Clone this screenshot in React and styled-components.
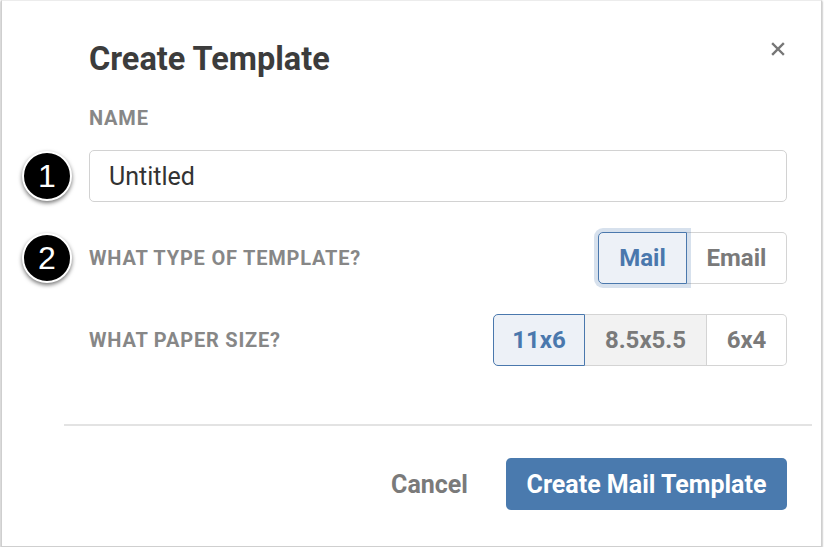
import React from 'react';
import styled, { createGlobalStyle } from 'styled-components';

const GlobalStyle = createGlobalStyle`
  html, body {
    margin: 0;
    background: #ffffff;
  }
  body {
    font-family: Roboto, "Liberation Sans", sans-serif;
  }
`;

const Frame = styled.div`
  position: relative;
  box-sizing: border-box;
  width: 821px;
  height: 547px;
  margin-left: 1px;
  background: #fff;
  border: 1px solid #cfcfcf;
  border-top-color: #ececec;
  box-shadow: 0 1px 2px rgba(0, 0, 0, 0.45);
  display: flex;
  flex-direction: column;
`;

const Body = styled.div`
  padding: 38px 34px 0 87px;
  display: flex;
  flex-direction: column;
`;

const Header = styled.div`
  display: flex;
  align-items: flex-start;
  justify-content: space-between;
`;

const Title = styled.h1`
  margin: 0;
  font-size: 32.5px;
  line-height: 40px;
  font-weight: 700;
  color: #3c3c3c;
`;

const Close = styled.button`
  border: 0;
  background: none;
  padding: 0;
  margin: 3px 2px 0 0;
  width: 14px;
  height: 14px;
  cursor: pointer;
  display: flex;
`;

const Label = styled.div`
  font-size: 20px;
  line-height: 22px;
  font-weight: 700;
  color: #878787;
  letter-spacing: 0.8px;
`;

const NameLabel = styled(Label)`
  margin-top: 28px;
`;

const Row = styled.div`
  position: relative;
  margin-top: ${p => p.$gap}px;
  display: flex;
  align-items: center;
  justify-content: space-between;
`;

const Input = styled.input`
  box-sizing: border-box;
  width: 100%;
  height: 52px;
  border: 1px solid #d2d2d2;
  border-radius: 5px;
  padding: 0 19px;
  font-family: inherit;
  font-size: 25px;
  color: #333;
  outline: none;
`;

const Badge = styled.div`
  position: absolute;
  left: -67px;
  top: 50%;
  transform: translateY(-50%);
  box-sizing: border-box;
  width: 50px;
  height: 50px;
  border-radius: 50%;
  background: #000;
  border: 2px solid #fff;
  box-shadow: 0 2px 4px rgba(0, 0, 0, 0.55);
  color: #fff;
  font-family: "Liberation Sans", Arial, sans-serif;
  font-size: 32px;
  display: flex;
  align-items: center;
  justify-content: center;
`;

const Segmented = styled.div`
  display: flex;
  height: 52px;
`;

const Segment = styled.button`
  box-sizing: border-box;
  height: 52px;
  width: ${p => p.$w}px;
  padding: 0;
  font-family: inherit;
  font-size: 24px;
  font-weight: 700;
  border: ${p => (p.$active ? 1.5 : 1)}px solid ${p => (p.$active ? '#4a78ad' : '#d4d4d4')};
  border-left-width: ${p => (p.$first || p.$active ? 1.5 : 0)}px;
  background: ${p => (p.$active ? '#edf1f7' : p.$muted ? '#f2f2f2' : '#fff')};
  color: ${p => (p.$active ? '#4a78ad' : '#7a7a7a')};
  box-shadow: ${p => (p.$glow ? '0 0 0 4px rgba(74, 120, 173, 0.22)' : 'none')};
  position: relative;
  z-index: ${p => (p.$active ? 1 : 0)};
  &:first-child {
    border-radius: 5px 0 0 5px;
  }
  &:last-child {
    border-radius: 0 5px 5px 0;
  }
`;

const Divider = styled.hr`
  margin: 58px 9px 0 62px;
  border: 0;
  border-top: 2px solid #e3e3e3;
`;

const Footer = styled.div`
  display: flex;
  justify-content: flex-end;
  align-items: center;
  gap: 38px;
  padding: 32px 34px 0 0;
`;

const CancelButton = styled.button`
  border: 0;
  background: none;
  padding: 0;
  font-family: inherit;
  font-size: 25px;
  font-weight: 700;
  color: #7a7a7a;
`;

const PrimaryButton = styled.button`
  box-sizing: border-box;
  height: 52px;
  width: 281px;
  border: 0;
  border-radius: 5px;
  background: #4a7aae;
  color: #fff;
  font-family: inherit;
  font-size: 25px;
  font-weight: 700;
`;

const templateTypes = [
  { label: 'Mail', w: 89, active: true, glow: true },
  { label: 'Email', w: 100 },
];

const paperSizes = [
  { label: '11x6', w: 92, active: true },
  { label: '8.5x5.5', w: 122, muted: true },
  { label: '6x4', w: 80 },
];

function SegmentGroup({ items }) {
  return (
    <Segmented>
      {items.map((it, i) => (
        <Segment
          key={it.label}
          $w={it.w}
          $first={i === 0}
          $active={it.active}
          $muted={it.muted}
          $glow={it.glow}
        >
          {it.label}
        </Segment>
      ))}
    </Segmented>
  );
}

export default function App() {
  return (
    <>
      <GlobalStyle />
      <Frame>
        <Body>
          <Header>
            <Title>Create Template</Title>
            <Close aria-label="Close">
              <svg width="14" height="14" viewBox="0 0 14 14">
                <path d="M2 2 L12 12 M12 2 L2 12" stroke="#767676" strokeWidth="2.4" strokeLinecap="square" />
              </svg>
            </Close>
          </Header>
          <NameLabel>NAME</NameLabel>
          <Row $gap={21}>
            <Badge>1</Badge>
            <Input defaultValue="Untitled" />
          </Row>
          <Row $gap={30}>
            <Badge>2</Badge>
            <Label>WHAT TYPE OF TEMPLATE?</Label>
            <SegmentGroup items={templateTypes} />
          </Row>
          <Row $gap={30}>
            <Label>WHAT PAPER SIZE?</Label>
            <SegmentGroup items={paperSizes} />
          </Row>
        </Body>
        <Divider />
        <Footer>
          <CancelButton>Cancel</CancelButton>
          <PrimaryButton>Create Mail Template</PrimaryButton>
        </Footer>
      </Frame>
    </>
  );
}
